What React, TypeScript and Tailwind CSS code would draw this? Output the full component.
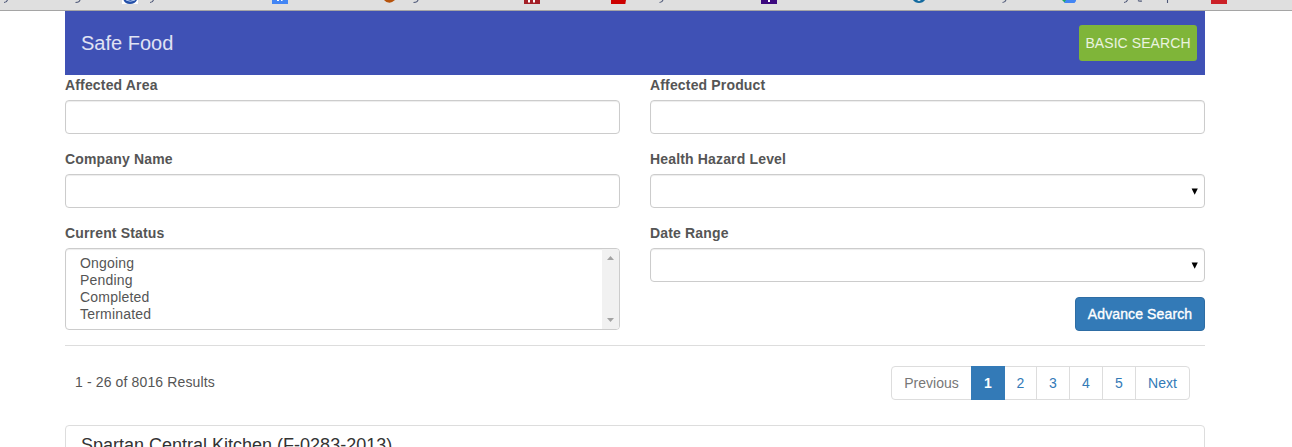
import type { ReactNode } from "react";

const fieldBox =
  "block h-[34px] w-full rounded border border-[#ccc] bg-white shadow-[inset_0_1px_1px_rgba(0,0,0,0.075)] outline-none";

function Field({ label, children }: { label: string; children: ReactNode }) {
  return (
    <div className="mb-[15px]">
      <div className="mb-[5px] h-5 text-[14px] leading-5 font-bold tracking-[0.16px]">{label}</div>
      {children}
    </div>
  );
}

function SelectBox({ label }: { label: string }) {
  return (
    <button aria-label={label} className={`${fieldBox} pr-[6px]`}>
      <svg className="ml-auto" width="7" height="7" viewBox="0 0 7 7">
        <path d="M.6.5h6.2L3.7 6.8z" fill="#000" />
      </svg>
    </button>
  );
}

function BookmarksStrip() {
  return (
    <div className="h-[11px] overflow-hidden border-b border-[#a5a5a5] bg-[#dfdfdf]">
      <svg width="1292" height="10" viewBox="0 0 1292 10" className="block">
        <g fill="none" stroke="#4d5777" strokeWidth="1.1">
          <path d="M7.5 0Q6.5 2.5 4 2.5" />
          <path d="M80 0Q79.5 2.5 75.5 2.5" />
          <path d="M153.500 0Q152.500 2.500 150 2.500" />
          <path d="M418 0Q417.500 2.500 413.500 2.500" />
          <path d="M663 0Q662 2.500 659.500 2.500" />
          <path d="M1006 0Q1005 2.500 1002.500 2.500" />
          <path d="M1127.500 0Q1126.500 2.500 1124 2.500" />
          <path d="M1138 0.500Q1139 1.500 1142 1" />
          <path d="M1167.500 0V3" />
        </g>
        <path d="M122 0h16v4h-16z" fill="#fff" />
        <path d="M123.500 0H137Q135 4 130 4Q125 4 123.500 0z" fill="#2450a8" />
        <path d="M126 0Q130 2.500 135 0" fill="none" stroke="#b6cdf3" />
        <path d="M272 0h16v4h-16z" fill="#4285f4" />
        <path d="M277 0h2v1h-2zM281 0h1.500v1H281z" fill="#fff" />
        <path d="M384 0h11Q392 2.700 389.500 2.700Q386 2.700 384 0z" fill="#b6530c" />
        <path d="M524 0h16v4h-16z" fill="#a31f27" />
        <path d="M528 0h2v2.500h-2zM533 0h2v2.500h-2z" fill="#fff" />
        <path d="M611 0h15l-.7 4H611z" fill="#cc0000" />
        <path d="M761 0h16v4h-16z" fill="#3b087e" />
        <path d="M768 0h2v2h-2z" fill="#fff" />
        <path d="M913 0h12Q923 3 919 3Q915 3 913 0z" fill="#146a9f" />
        <path d="M917 0h4l-2 1.200z" fill="#dfeaf2" />
        <path d="M1062 0h5l-2.500 2.500z" fill="#20a767" />
        <path d="M1066 0h10v1l-1.500 2H1064z" fill="#4285f4" />
        <path d="M1211 0h16v4h-16z" fill="#cb2027" />
      </svg>
    </div>
  );
}

const statuses = ["Ongoing", "Pending", "Completed", "Terminated"];
const pages = ["2", "3", "4", "5"];

export default function App() {
  return (
    <div className="h-[447px] w-[1292px] overflow-hidden bg-white font-['Liberation_Sans',sans-serif] text-[14px] leading-5 text-[#555]">
      <BookmarksStrip />
      <main className="ml-[65px] w-[1140px]">
        <header className="flex h-16 items-center justify-between bg-[#3f51b5] pr-2 pl-4">
          <h1 className="text-[20px] leading-7 text-white/84">Safe Food</h1>
          <button className="h-9 w-[118px] rounded-[3px] bg-[#7fb539] text-[14px] tracking-[0.08px] text-white/84">BASIC SEARCH</button>
        </header>

        <section className="grid h-[270px] grid-cols-2 gap-x-[30px]">
          <div>
            <Field label="Affected Area">
              <input aria-label="Affected Area" className={fieldBox} />
            </Field>
            <Field label="Company Name">
              <input aria-label="Company Name" className={fieldBox} />
            </Field>
            <Field label="Current Status">
              <div className="flex h-[82px] overflow-hidden rounded border border-[#ccc] shadow-[inset_0_1px_1px_rgba(0,0,0,0.075)]">
                <ul className="flex-1 pt-[6px] pl-[14px] leading-[17px] tracking-[0.2px]">
                  {statuses.map((s) => (
                    <li key={s}>{s}</li>
                  ))}
                </ul>
                <div className="flex w-[17px] flex-col items-center justify-between bg-[#f1f1f1] pt-[7px] pb-[7px]">
                  <svg width="7" height="4" viewBox="0 0 7 4">
                    <path d="M3.500 0L7 4H0z" fill="#a3a3a3" />
                  </svg>
                  <svg width="7" height="4" viewBox="0 0 7 4">
                    <path d="M0 0h7L3.500 4z" fill="#a3a3a3" />
                  </svg>
                </div>
              </div>
            </Field>
          </div>
          <div>
            <Field label="Affected Product">
              <input aria-label="Affected Product" className={fieldBox} />
            </Field>
            <Field label="Health Hazard Level">
              <SelectBox label="Health Hazard Level" />
            </Field>
            <Field label="Date Range">
              <SelectBox label="Date Range" />
            </Field>
            <button className="ml-auto block h-[34px] w-[130px] rounded border border-[#2e6da4] bg-[#337ab7] tracking-[0.12px] text-white [-webkit-text-stroke:0.35px_#fff]">
              Advance Search
            </button>
          </div>
        </section>

        <section className="flex h-20 justify-between border-t border-[#ddd] pt-5 pr-[15px] pl-[10px]">
          <p className="pt-[6px] tracking-[0.13px]">1 - 26 of 8016 Results</p>
          <nav className="flex h-[34px] rounded border border-[#ddd] leading-8 text-[#337ab7]">
            <span className="w-[79px] text-center text-[#777]">Previous</span>
            <span className="-my-px w-[34px] bg-[#337ab7] text-center leading-[34px] font-bold text-white">1</span>
            {pages.map((p, i) => (
              <a key={p} className={`${i === 0 ? "w-[32px]" : "w-[33px]"} border-r border-[#ddd] text-center`}>
                {p}
              </a>
            ))}
            <a className="w-[53px] text-center">Next</a>
          </nav>
        </section>

        <article className="h-20 rounded border border-[#ddd] pt-[9px] pl-[15px] text-[18px] leading-5 text-[#333]">
          Spartan Central Kitchen (F-0283-2013)
        </article>
      </main>
    </div>
  );
}
